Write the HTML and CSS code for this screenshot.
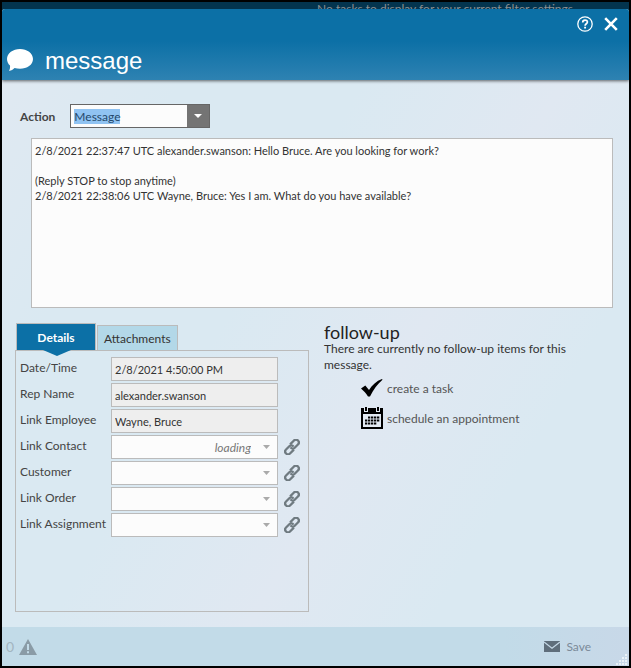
FILE: index.html
```html
<!DOCTYPE html>
<html lang="en">
<head>
  <meta charset="UTF-8">
  <meta name="viewport" content="width=device-width, initial-scale=1.0">
  <title>message</title>
  <link rel="stylesheet" href="styles.css">
</head>
<body>
  <svg class="sprite" aria-hidden="true">
    <symbol id="icon-link" viewBox="0 0 16 16">
      <g fill="none" stroke="currentColor" stroke-width="2.300" transform="rotate(-45 8 8)">
        <path d="M7.500 11.200 H2 A2.800 2.800 0 0 1 2 5.600 H6.600 A2.800 2.800 0 0 1 9.400 8.800"/>
        <path d="M8.500 4.800 H14 A2.800 2.800 0 0 1 14 10.400 H9.400 A2.800 2.800 0 0 1 6.600 7.200"/>
      </g>
    </symbol>
  </svg>

  <div class="page">
    <!-- task list behind the dialog -->
    <div class="backdrop">No tasks to display for your current filter settings</div>

    <div class="dialog">
      <header class="header">
        <div class="header-tools">
          <button class="icon-btn" type="button" aria-label="Help">
            <svg width="16" height="16" viewBox="0 0 16 16" fill="none" stroke="#fff">
              <circle cx="8" cy="8" r="7.2" stroke-width="1.3"/>
              <path d="M5.7 6.4 C5.7 3.3 10.4 3.4 10.4 6 C10.4 7.8 8.1 7.7 8.1 9.8" stroke-width="1.7"/>
              <path d="M8.1 10.8 V12.6" stroke-width="1.9"/>
            </svg>
          </button>
          <button class="icon-btn" type="button" aria-label="Close">
            <svg width="14" height="14" viewBox="0 0 14 14" stroke="#fff" stroke-width="2.6">
              <path d="M1.2 1.2 L12.8 12.8 M12.8 1.2 L1.2 12.8"/>
            </svg>
          </button>
        </div>
        <div class="title">
          <svg width="26" height="23" viewBox="0 0 26 23" fill="#fff">
            <path d="M13 0 C20 0 26 4.2 26 10 C26 15.800 20 19.800 13 19.800 C11 19.800 9.200 19.500 7.600 19 C6 20.600 4.400 21.600 2 22 C2.800 20.600 3.300 18.800 3 16.600 C1 14.800 0 12.600 0 10 C0 4.200 6 0 13 0 Z"/>
          </svg>
          <h1>message</h1>
        </div>
      </header>

      <main class="content">
        <div class="action">
          <label for="action">Action</label>
          <div class="combo">
            <input id="action" class="combo-input" type="text" value="Message" autocomplete="off">
            <button class="combo-btn" type="button" aria-label="Show actions">
              <svg width="8" height="4" viewBox="0 0 8 4" fill="#fff"><path d="M0 0 H8 L4 4 Z"/></svg>
            </button>
          </div>
        </div>

        <textarea class="log" aria-label="Message log" spellcheck="false" readonly>2/8/2021 22:37:47 UTC alexander.swanson: Hello Bruce. Are you looking for work?

(Reply STOP to stop anytime)
2/8/2021 22:38:06 UTC Wayne, Bruce: Yes I am. What do you have available?</textarea>

        <div class="columns">
          <section class="details">
            <div class="tabs">
              <button class="tab active" type="button">Details</button>
              <button class="tab" type="button">Attachments</button>
            </div>
            <div class="panel">
              <label for="date">Date/Time</label>
              <input id="date" class="field" type="text" value="2/8/2021 4:50:00 PM" readonly>

              <label for="rep">Rep Name</label>
              <input id="rep" class="field" type="text" value="alexander.swanson" readonly>

              <label for="employee">Link Employee</label>
              <input id="employee" class="field" type="text" value="Wayne, Bruce" readonly>

              <label for="contact">Link Contact</label>
              <select id="contact" class="field loading"><option>loading</option></select>
              <button class="link-btn" type="button" aria-label="Link contact"><svg width="16" height="16"><use href="#icon-link"/></svg></button>

              <label for="customer">Customer</label>
              <select id="customer" class="field"><option></option></select>
              <button class="link-btn" type="button" aria-label="Link customer"><svg width="16" height="16"><use href="#icon-link"/></svg></button>

              <label for="order">Link Order</label>
              <select id="order" class="field"><option></option></select>
              <button class="link-btn" type="button" aria-label="Link order"><svg width="16" height="16"><use href="#icon-link"/></svg></button>

              <label for="assignment">Link Assignment</label>
              <select id="assignment" class="field"><option></option></select>
              <button class="link-btn" type="button" aria-label="Link assignment"><svg width="16" height="16"><use href="#icon-link"/></svg></button>
            </div>
          </section>

          <section class="follow-up">
            <h2>follow-up</h2>
            <p>There are currently no follow-up items for this message.</p>
            <a class="follow-link" href="#">
              <svg width="22" height="22" viewBox="0 0 22 22">
                <path d="M0 11.500 L4.300 8.500 L8 13 C11 8 15.500 4 21 2 L21.500 2.800 C16.500 7 12.500 12.500 9 19.500 L7 19.500 C5 16.500 3 14 0 11.500 Z"/>
              </svg>
              create a task
            </a>
            <a class="follow-link" href="#">
              <svg width="22" height="22" viewBox="0 0 22 22">
                <path d="M0 1 H22 V22 H0 Z"/>
                <path d="M2 7 H20 V20 H2 Z" fill="#e2e9f2"/>
                <path d="M5 0 V5 M17 0 V5" stroke="#e2e9f2" stroke-width="4"/>
                <path d="M5 0 V4 M17 0 V4" stroke="#000" stroke-width="2"/>
                <path d="M7 10.500 H19 M4 13.500 H19 M4 16.500 H16" stroke="#000" stroke-width="2.200" stroke-dasharray="2.300 .7"/>
              </svg>
              schedule an appointment
            </a>
          </section>
        </div>
      </main>

      <footer class="footer">
        <div class="warnings">
          <span>0</span>
          <svg width="18" height="16" viewBox="0 0 18 16">
            <path d="M9 0 L18 16 H0 Z" fill="#8a9ba6"/>
            <path d="M9 5 V11 M9 12.200 V14.200" stroke="#c3dbe8" stroke-width="2"/>
          </svg>
        </div>
        <button class="save" type="button">
          <svg width="16" height="11" viewBox="0 0 16 11">
            <path d="M0 0 H16 V11 H0 Z" fill="#5f6e7b"/>
            <path d="M0 1 L8 7.200 L16 1" fill="none" stroke="#c5d9e7" stroke-width="1.300"/>
          </svg>
          Save
        </button>
        <svg class="grip" width="12" height="12" viewBox="0 0 12 12" stroke="#e9f1f7" stroke-width="2" stroke-dasharray="2 1">
          <path d="M10 0 V12 M7 3 V12 M4 6 V12 M1 9 V12"/>
        </svg>
      </footer>
    </div>
  </div>

  <script>
    // action text starts out selected
    const actionEl = document.querySelector(".combo-input")
    actionEl.focus()
    actionEl.select()
  </script>
</body>
</html>
```
FILE: styles.css
```css
* {
  box-sizing: border-box;
}

body {
  margin: 0;
  font-family: Lato, "Liberation Sans", sans-serif;
  font-size: 12px;
  color: #333;
}

button, input, select, textarea {
  font: inherit;
  color: inherit;
  margin: 0;
  border-radius: 0;
  outline: none;
}

button {
  padding: 0;
  border: none;
  background: none;
  cursor: pointer;
}

svg {
  display: block;
  flex: none;
}

.sprite {
  position: absolute;
  width: 0;
  height: 0;
}

.page {
  display: flex;
  flex-direction: column;
  min-height: 100vh;
  border: 2px solid #000;
  background-color: #03344e;
}

.backdrop {
  height: 7px;
  padding-right: 56px;
  overflow: hidden;
  line-height: 14px;
  text-align: right;
  white-space: nowrap;
  color: #8b8f91;
  background-color: #03344e;
}

.dialog {
  flex: 1;
  display: flex;
  flex-direction: column;
  border-radius: 3px 3px 0 0;
  overflow: hidden;
  background: linear-gradient(120deg, #e1e9f2 0%, #dae9f2 22%, #dae9f2 40%, #e0e8f2 60%, #dae9f2 78%);
}

/* 标题栏 */
.header {
  padding: 7px 11px 2px 5px;
  background: linear-gradient(#0c70a6 45%, #2e82b2);
  box-shadow: 0 1px 3px rgba(0, 0, 0, .6);
}

.header-tools {
  display: flex;
  justify-content: flex-end;
  align-items: center;
  gap: 11px;
  height: 16px;
}

.title {
  display: flex;
  align-items: center;
  gap: 12px;
  height: 46px;
  padding-top: 10px;
}

.title h1 {
  margin: 0;
  padding-top: 2px;
  font-family: "Liberation Sans", sans-serif;
  font-size: 24px;
  font-weight: normal;
  line-height: 28px;
  color: #fff;
}

.content {
  flex: 1;
  display: flex;
  flex-direction: column;
  padding: 24px 11px 15px 13px;
}

.action {
  display: flex;
  align-items: center;
  gap: 15px;
  padding-left: 5px;
}

.action label {
  font-weight: bold;
  color: #444;
}

.combo {
  display: flex;
  width: 140px;
  height: 24px;
  border: 1px solid #666;
  background-color: #fcfcfc;
}

.combo-input {
  flex: 1;
  min-width: 0;
  padding: 0 3px;
  border: none;
  background: none;
}

.combo-input::selection {
  color: #24486b;
  background-color: #90c3f2;
}

.combo-btn {
  display: flex;
  align-items: center;
  justify-content: center;
  width: 22px;
  background-color: #747474;
}

.log {
  height: 170px;
  margin: 10px 5px 15px 16px;
  padding: 4px 3px;
  border: 1px solid #bbb;
  background-color: #fcfcfc;
  font-size: 11px;
  line-height: 15px;
  resize: none;
}

.columns {
  flex: 1;
  display: grid;
  grid-template-columns: 1fr 1fr;
  gap: 15px;
}

.details {
  display: flex;
  flex-direction: column;
}

.tabs {
  display: flex;
  align-items: flex-end;
  gap: 1px;
  padding-left: 1px;
}

.tab {
  height: 25px;
  padding: 0 6px;
  border: 1px solid #bbb;
  border-bottom: none;
  background-color: #b3d8e8;
}

.tab.active {
  position: relative;
  width: 80px;
  height: 27px;
  font-weight: bold;
  color: #fff;
  background-color: #0c70a6;
}

.tab.active::after {
  content: "";
  position: absolute;
  left: 26px;
  top: 26px;
  width: 28px;
  height: 6px;
  background-color: #0c70a6;
  clip-path: polygon(0 0, 100% 0, 50% 100%);
}

.panel {
  flex: 1;
  display: grid;
  grid-template-columns: 89px 1fr 24px;
  grid-auto-rows: 24px;
  align-content: start;
  row-gap: 2px;
  column-gap: 2px;
  padding: 6px 4px 0;
  border: 1px solid #bbb;
}

.panel label {
  grid-column: 1;
  line-height: 22px;
  white-space: nowrap;
  color: #444;
}

.field {
  grid-column: 2;
  width: 100%;
  height: 24px;
  padding: 0 3px;
  border: 1px solid #bbb;
  background-color: #eee;
  font-size: 11px;
}

select.field {
  appearance: none;
  padding-right: 26px;
  background: #fcfcfc url("data:image/svg+xml,%3Csvg xmlns='http://www.w3.org/2000/svg' width='7' height='4'%3E%3Cpath d='M0 0H7L3.5 4Z' fill='%23aaa'/%3E%3C/svg%3E") no-repeat right 7px center;
}

.field.loading {
  font-size: 12px;
  font-style: italic;
  text-align-last: right;
  color: #777;
}

.link-btn {
  display: flex;
  align-items: center;
  justify-content: center;
  color: #6f7a80;
}

.link-btn svg {
  overflow: visible;
}

.follow-up {
  padding-right: 40px;
}

.follow-up h2 {
  margin: 0;
  font-size: 18px;
  font-weight: normal;
  line-height: 18px;
  color: #222;
}

.follow-up p {
  margin: 0 0 4px;
  line-height: 16px;
}

.follow-link {
  display: flex;
  align-items: center;
  gap: 4px;
  height: 22px;
  margin: 0 0 8px 37px;
  color: #555;
  text-decoration: none;
}

.footer {
  position: relative;
  display: flex;
  align-items: center;
  justify-content: space-between;
  height: 39px;
  padding: 0 38px 0 4px;
  background: linear-gradient(90deg, #c2dbe8 80%, #c8d8e8);
}

.warnings {
  display: flex;
  align-items: center;
  gap: 5px;
  font-size: 14px;
  color: #a3b5c0;
}

.save {
  display: flex;
  align-items: center;
  gap: 6px;
  color: #7b8a98;
}

.grip {
  position: absolute;
  right: 1px;
  bottom: 0;
}
```
